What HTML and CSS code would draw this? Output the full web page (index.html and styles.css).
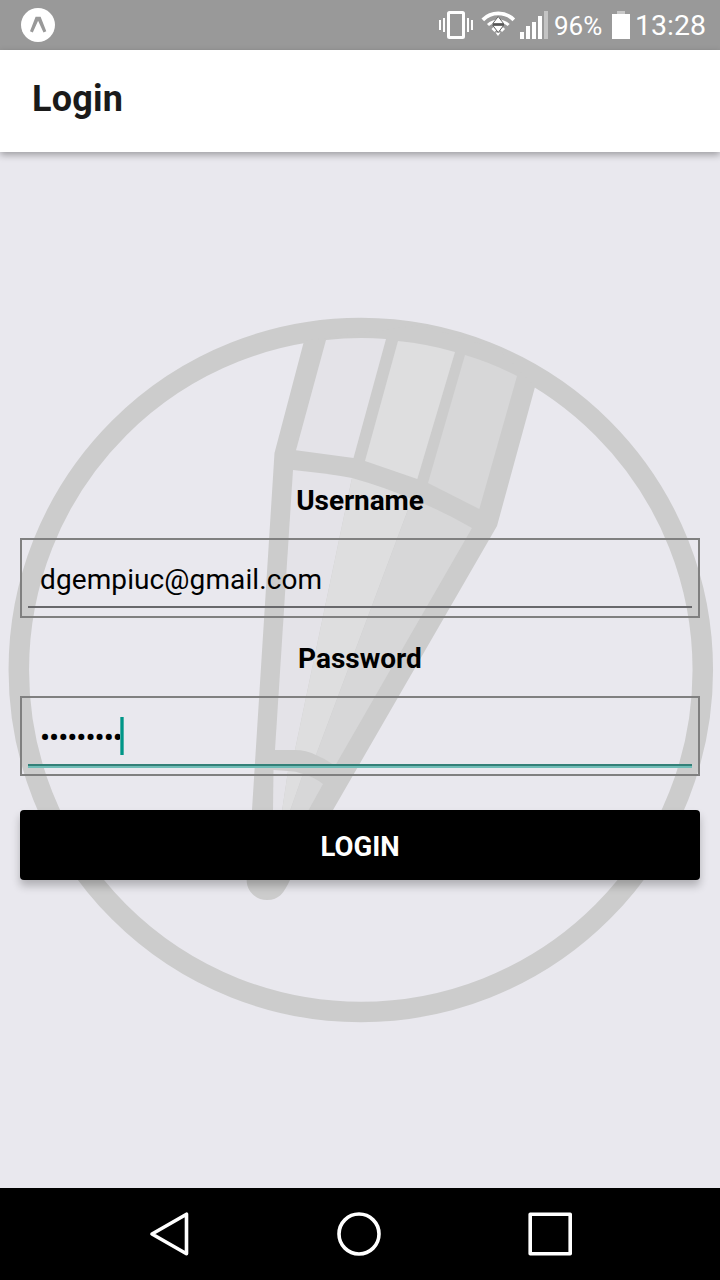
FILE: index.html
```html
<!DOCTYPE html>
<html lang="en">
<head>
<meta charset="utf-8">
<title>Login</title>
<link rel="stylesheet" href="styles.css">
</head>
<body>
<div class="screen">
  <div class="status-bar">
    <svg class="app-badge" width="36" height="36" viewBox="0 0 36 36">
      <circle cx="18" cy="18" r="17" fill="#fff"/>
      <path d="M10 24.300L15.600 9.800H20.600L26.300 24.300L23.500 25.500L18.100 13.700L12.800 25.500Z" fill="#999"/>
    </svg>
    <div class="indicators">
      <svg class="signals" width="112" height="50" viewBox="438 0 112 50">
        <rect x="448.500" y="12.500" width="15" height="25" rx="1" fill="none" stroke="#fff" stroke-width="3"/>
        <path d="M440 20v10M444 18v14M468 18v14M472 20v10" stroke="#fff" stroke-width="2" fill="none"/>
        <path d="M482.800 19.800a22 22 0 0 1 31 0" stroke="#fff" stroke-width="3.800" fill="none"/>
        <path d="M488 25a15 15 0 0 1 20.600 0M492.500 28l3 3M504 28l-3 3" stroke="#fff" stroke-width="3" fill="none"/>
        <path d="M495.500 32.500h5l-2.500 3.500z" fill="#fff"/>
        <path d="M498.200 16.500l5.500 7.200h-11zM498.200 32.500l5.500-7.200h-11z" fill="#fff" stroke="#666" stroke-width="1"/>
        <path d="M493 24.500h11" stroke="#555" stroke-width="1.800"/>
        <path d="M520 32h4v7h-4zM526 26h4v13h-4zM532 22h4v17h-4zM538 16h4v23h-4z" fill="#fff"/>
        <path d="M544 11h4v28h-4z" fill="#c4c4c4"/>
      </svg>
      <span class="percent">96%</span>
      <svg class="battery" width="18" height="28" viewBox="0 0 18 28">
        <path d="M5 0h8v3H5z" fill="#c8c8c8"/><path d="M0 3h18v25H0z" fill="#fff"/>
      </svg>
      <span class="clock">13:28</span>
    </div>
  </div>
  <header class="toolbar"><h1 class="title">Login</h1></header>
  <main class="content">
    <svg class="backdrop" width="720" height="1036" viewBox="0 152 720 1036">
      <circle cx="360.800" cy="670" r="342" fill="none" stroke="#ccc" stroke-width="20.500"/>
      <path d="M304 341L274.500 453L252 810L246.700 879C246 891 256 900 267 900C279 900 284 893 290 880L333 810L497 526L535 387L500 350L420 325Z" fill="#ccc"/>
      <path d="M326 340Q356 336.500 386 339L353.500 458L296 450.300Z" fill="#e4e3e8"/>
      <path d="M398 341Q428 344 455 352L417.300 479L365 461Z" fill="#dededf"/>
      <path d="M465 355Q492 363 517 376L479.300 509L428 483Z" fill="#d7d7d8"/>
      <path d="M293 470Q325 473 352 478L295 750L275 750Z" fill="#e4e3e8"/>
      <path d="M352 478Q384 487 412 499L316 755Q306 750 295 750Z" fill="#dededf"/>
      <path d="M412 499Q443 511 472 528L335 766Q326 759 316 755Z" fill="#d7d7d8"/>
      <path d="M273.500 770L288 771L282 811H273Z" fill="#e4e3e8"/>
      <path d="M288 771Q296 771 303 774L290 811H282Z" fill="#dededf"/>
      <path d="M303 774Q314 777 323 784L308 811H290Z" fill="#d7d7d8"/>
    </svg>
    <form class="form">
      <div class="label">Username</div>
      <div class="field"><div class="line"><span class="value">dgempiuc@gmail.com</span></div></div>
      <div class="label">Password</div>
      <div class="field"><div class="line focused"><span class="value dots">•••••••••</span><span class="caret"></span></div></div>
      <button class="submit" type="button">LOGIN</button>
    </form>
  </main>
  <nav class="nav-bar">
    <svg width="720" height="92" viewBox="0 1188 720 92" fill="none" stroke="#fff" stroke-width="3.600" stroke-linejoin="round">
      <path d="M152 1234L186.500 1214.200V1253.800Z"/>
      <circle cx="359" cy="1234" r="20"/>
      <path d="M530.200 1214.200h40v39.600h-40z"/>
    </svg>
  </nav>
</div>
</body>
</html>
```
FILE: styles.css
```css
* { box-sizing: border-box; }
body { margin: 0; font-family: Roboto, "Liberation Sans", sans-serif; }
.screen { display: flex; flex-direction: column; width: 720px; height: 1280px; overflow: hidden; background: #e9e8ee; }
.status-bar { display: flex; justify-content: space-between; align-items: center; height: 50px; flex: none; padding: 0 16px 0 20px; background: #999; color: #fff; }
.app-badge, .signals, .battery { display: block; flex: none; }
.indicators { display: flex; align-items: center; height: 50px; white-space: nowrap; }
.percent { width: 57px; padding-left: 4px; font-size: 26px; line-height: 50px; padding-top: 2px; }
.battery { margin: 0 0 0 5px; }
.clock { width: 76px; margin-left: 4px; margin-right: -6px; padding: 2px 0 0 1px; font-size: 28.500px; line-height: 50px; }
.toolbar { position: relative; z-index: 1; display: flex; align-items: center; height: 102px; flex: none; padding: 0 32px 4px; background: #fff; box-shadow: 0 3px 7px rgba(0, 0, 0, .32); }
.title { margin: 0; font-size: 36px; line-height: 44px; font-weight: 700; letter-spacing: .2px; color: #1a1a1a; }
.content { position: relative; flex: 1; padding: 318px 20px 0; }
.backdrop { position: absolute; top: 0; left: 0; }
.form { position: relative; color: #000; }
.label { height: 68px; padding-top: 13px; text-align: center; font-size: 28px; line-height: 36px; font-weight: 700; letter-spacing: -.1px; }
.field { height: 80px; padding: 6px; border: 2px solid #808080; }
.field + .label { height: 78px; padding-top: 23px; letter-spacing: 0; }
.line { display: flex; align-items: center; height: 62px; padding: 0 12px; border-bottom: 2px solid #68686b; }
.focused { height: 64px; border-bottom: 2px solid #70bdb7; box-shadow: inset 0 -2px #348078; }
.value { font-size: 28px; line-height: 36px; padding-top: 8px; letter-spacing: .1px; }
.dots { width: 80px; padding: 5px 0 0; font-size: 30px; letter-spacing: -1.030px; }
.caret { width: 4px; height: 38px; margin-top: 2px; background: linear-gradient(90deg, #4db0a7 25%, #009688 25% 75%, #4db0a7 75%); }
.submit { display: block; width: 100%; height: 70px; margin-top: 34px; padding: 3px 0 0; border: 0; border-radius: 4px; background: #000; color: #fff; font: 700 27.500px/36px Roboto, "Liberation Sans", sans-serif; box-shadow: 0 6px 8px rgba(0, 0, 0, .24); }
.nav-bar { height: 92px; flex: none; background: #000; }
.nav-bar svg { display: block; }
```
